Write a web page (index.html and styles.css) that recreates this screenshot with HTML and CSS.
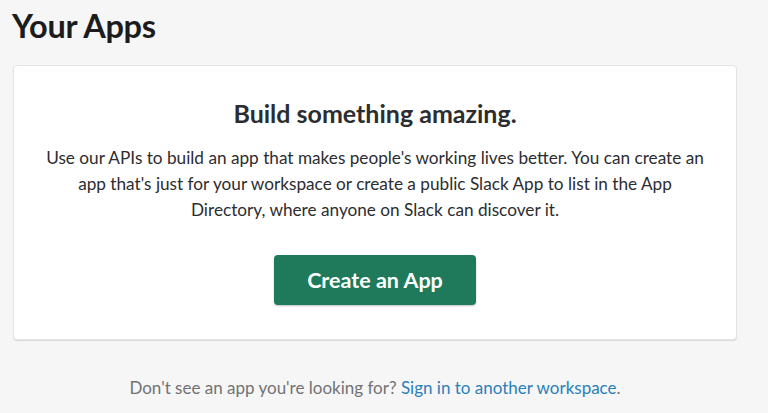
FILE: index.html
```html
<!DOCTYPE html>
<html>
<head>
<meta charset="utf-8">
<link rel="stylesheet" href="styles.css">
</head>
<body>
<main class="page">
  <h1 class="title">Your Apps</h1>
  <section class="card">
    <h2 class="card-heading">Build something amazing.</h2>
    <p class="card-text">Use our APIs to build an app that makes people's working lives better. You can create an app that's just for your workspace or create a public Slack App to list in the App Directory, where anyone on Slack can discover it.</p>
    <button class="btn-create">Create an App</button>
  </section>
  <p class="footer-note">Don't see an app you're looking for? <a class="link" href="#">Sign in to another workspace</a>.</p>
</main>
</body>
</html>
```
FILE: styles.css
```css
html, body {
  margin: 0;
  padding: 0;
  background: #f6f6f6;
  font-family: Lato, "Noto Sans", sans-serif;
}
.page {
  width: 724px;
  padding: 0 0 0 13px;
  display: flex;
  flex-direction: column;
}
.title {
  margin: 6px 0 0 -1px;
  font-size: 32.5px;
  line-height: 40px;
  font-weight: 700;
  color: #1d1c1d;
  letter-spacing: -0.3px;
}
.card {
  margin-top: 19px;
  height: 275px;
  box-sizing: border-box;
  background: #fff;
  border: 1px solid #e4e4e4;
  border-radius: 4px;
  box-shadow: 0 1px 1px rgba(0,0,0,0.12);
  display: flex;
  flex-direction: column;
  align-items: center;
  padding: 30px 30px 0;
  text-align: center;
}
.card-heading {
  margin: 0;
  font-size: 25px;
  line-height: 34px;
  font-weight: 700;
  color: #2c2d30;
}
.card-text {
  margin: 15px 0 0;
  font-size: 17.2px;
  line-height: 26px;
  color: #2c2d30;
  max-width: 670px;
}
.btn-create {
  margin-top: 32px;
  width: 202px;
  height: 50px;
  border: none;
  border-radius: 4px;
  background: #1e7a5a;
  color: #fff;
  font-family: Lato, "Noto Sans", sans-serif;
  font-size: 21.5px;
  font-weight: 700;
  box-shadow: 0 1px 2px rgba(0,0,0,0.25);
}
.footer-note {
  margin: 37px 0 0;
  text-align: center;
  font-size: 17px;
  line-height: 22px;
  color: #717274;
}
.link {
  color: #2a80b9;
  text-decoration: none;
}
```
